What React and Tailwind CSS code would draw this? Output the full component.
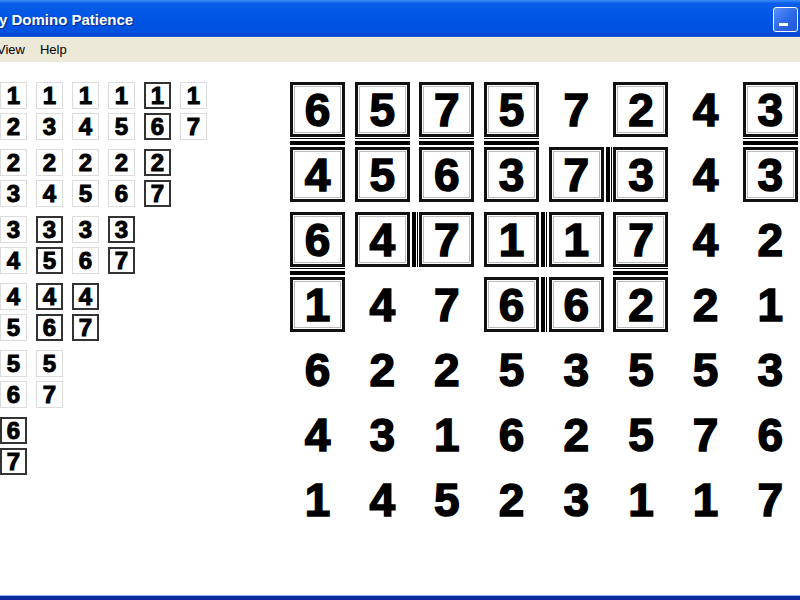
import React from 'react';

const digitFont = { fontFamily: '"Liberation Sans", Arial, sans-serif' };

// left column of remaining dominoes, true = framed
const stock = [
    [[1, 2], [1, 3], [1, 4], [1, 5], [1, 6, true], [1, 7]],
    [[2, 3], [2, 4], [2, 5], [2, 6], [2, 7, true]],
    [[3, 4], [3, 5, true], [3, 6], [3, 7, true]],
    [[4, 5], [4, 6, true], [4, 7, true]],
    [[5, 6], [5, 7]],
    [[6, 7, true]],
];

const board = [
    [6, 5, 7, 5, 7, 2, 4, 3],
    [4, 5, 6, 3, 7, 3, 4, 3],
    [6, 4, 7, 1, 1, 7, 4, 2],
    [1, 4, 7, 6, 6, 2, 2, 1],
    [6, 2, 2, 5, 3, 5, 5, 3],
    [4, 3, 1, 6, 2, 5, 7, 6],
    [1, 4, 5, 2, 3, 1, 1, 7],
];

const framed = new Set([
    '0-0', '0-1', '0-2', '0-3', '0-5', '0-7',
    '1-0', '1-1', '1-2', '1-3', '1-4', '1-5', '1-7',
    '2-0', '2-1', '2-2', '2-3', '2-4', '2-5',
    '3-0', '3-3', '3-4', '3-5',
]);

// joins to the cell below
const downJoins = new Set(['0-0', '0-1', '0-2', '0-3', '0-7', '2-0', '2-5']);
// joins to the cell on the right
const rightJoins = new Set(['1-4', '2-1', '2-3', '3-3']);

const SmallTile = ({ n, on }) => (
    <div
        className={`w-[27px] h-[27px] flex items-center justify-center text-[24px] font-bold leading-none text-black [-webkit-text-stroke:1px_black] ${on ? 'border-2 border-[#333]' : 'border border-[#dcdcdc]'}`}
        style={digitFont}
    >
        {n}
    </div>
);

const Cell = ({ n, id }) => (
    <div className="relative w-[55px] h-[55px]">
        <div
            className={`w-full h-full flex items-center justify-center text-[46px] font-bold leading-none text-black [-webkit-text-stroke:1.5px_black] ${framed.has(id) ? 'border-[3px] border-[#111] shadow-[inset_0_0_0_1px_#fff,inset_0_0_0_2px_#bbb]' : ''}`}
            style={digitFont}
        >
            {n}
        </div>
        {downJoins.has(id) && (
            <div className="absolute left-0 right-0 top-[56px] h-[7px] border-t border-b-4 border-black"></div>
        )}
        {rightJoins.has(id) && (
            <div className="absolute top-0 bottom-0 left-[57px] w-[6px] border-l-4 border-r border-black"></div>
        )}
    </div>
);

export default function App() {
    return (
        <div className="w-[800px] h-[600px] overflow-hidden flex flex-col bg-white">
            {/* Title bar */}
            <div className="h-[37px] shrink-0 flex items-center justify-between bg-[linear-gradient(to_bottom,#3d8ef8_0%,#0a5de8_9%,#0055e5_45%,#0052df_85%,#0043cc_96%,#2e6fe0_100%)]">
                <span
                    className="text-white text-[15px] font-bold -ml-[1px] mt-[3px] [text-shadow:1px_1px_1px_#0a2a8c]"
                    style={{ fontFamily: '"Liberation Sans", Arial, sans-serif' }}
                >
                    y Domino Patience
                </span>
                <div className="relative w-[25px] h-[25px] mr-[2px] mt-[1px] rounded-[3px] border border-white bg-[linear-gradient(135deg,#5b93fa_0%,#2f6ae8_50%,#1f56d6_100%)]">
                    <div className="absolute left-[5px] bottom-[5px] w-[9px] h-[3px] bg-white"></div>
                </div>
            </div>

            {/* Menu bar */}
            <div
                className="h-[25px] shrink-0 bg-[#ece9d8] flex items-center gap-[15px] text-[13px] text-black"
                style={{ fontFamily: '"Liberation Sans", Arial, sans-serif' }}
            >
                <span className="-ml-[3px]">View</span>
                <span>Help</span>
            </div>

            {/* Game area */}
            <div className="flex-1 flex pt-[20px] bg-white">
                <div className="w-[290px] shrink-0 flex flex-col gap-[9px]">
                    {stock.map((group, gi) => (
                        <div key={gi} className="flex gap-[9px]">
                            {group.map(([a, b, on], ti) => (
                                <div key={ti} className="flex flex-col gap-[4px]">
                                    <SmallTile n={a} on={on} />
                                    <SmallTile n={b} on={on} />
                                </div>
                            ))}
                        </div>
                    ))}
                </div>

                <div className="grid grid-cols-[repeat(8,55px)] gap-x-[9.7px] gap-y-[10px] content-start">
                    {board.map((row, r) =>
                        row.map((n, c) => <Cell key={`${r}-${c}`} n={n} id={`${r}-${c}`} />)
                    )}
                </div>
            </div>

            {/* bottom frame */}
            <div className="h-[5px] shrink-0 border-t border-[#8fb1f0] bg-[#0a2a9c]"></div>
        </div>
    );
}
